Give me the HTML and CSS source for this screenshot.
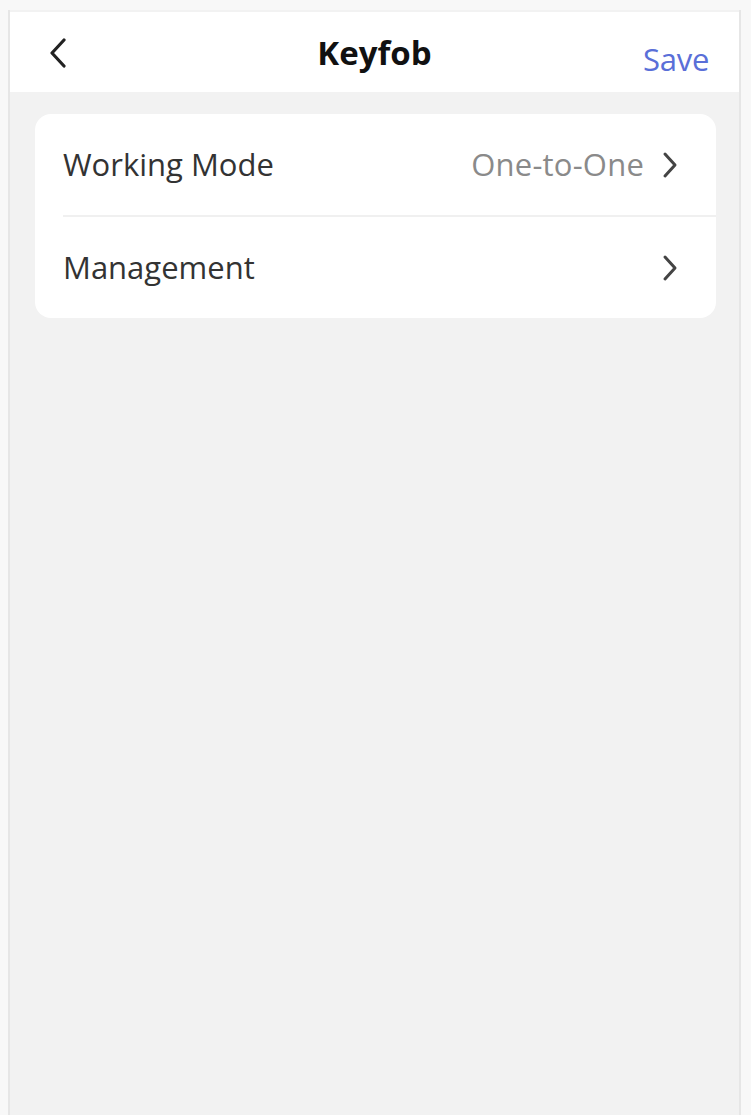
FILE: index.html
```html
<!DOCTYPE html>
<html>
<head>
<meta charset="utf-8">
<link rel="stylesheet" href="styles.css">
</head>
<body>
<div class="frame">
  <header class="nav">
    <span class="back">
      <svg width="20" height="30" viewBox="0 0 20 30"><path d="M16 2 L4 15 L16 28" fill="none" stroke="#222" stroke-width="3.2" stroke-linecap="round" stroke-linejoin="round"/></svg>
    </span>
    <h1 class="title">Keyfob</h1>
    <span class="save">Save</span>
  </header>
  <main class="content">
    <div class="card">
      <div class="row">
        <span class="label">Working Mode</span>
        <span class="value">One-to-One</span>
        <svg class="chev" width="18" height="28" viewBox="0 0 18 28"><path d="M4 3 L14 14 L4 25" fill="none" stroke="#444" stroke-width="3" stroke-linecap="round" stroke-linejoin="round"/></svg>
      </div>
      <div class="row">
        <span class="label">Management</span>
        <span class="value"></span>
        <svg class="chev" width="18" height="28" viewBox="0 0 18 28"><path d="M4 3 L14 14 L4 25" fill="none" stroke="#444" stroke-width="3" stroke-linecap="round" stroke-linejoin="round"/></svg>
      </div>
    </div>
  </main>
</div>
</body>
</html>
```
FILE: styles.css
```css
html, body {
  margin: 0;
  padding: 0;
  height: 100%;
}
body {
  background: #f8f8f8;
  font-family: "Open Sans", "Liberation Sans", sans-serif;
}
.frame {
  margin: 10px 10px 0 8px;
  height: 1105px;
  border-left: 2px solid #e6e6e6;
  border-right: 2px solid #e6e6e6;
  display: flex;
  flex-direction: column;
  background: #f2f2f2;
}
.nav {
  height: 80px;
  margin-top: 2px;
  background: #fff;
  display: grid;
  grid-template-columns: 1fr auto 1fr;
  align-items: center;
  padding: 0 31px;
}
.back {
  display: flex;
  width: 20px;
  margin-top: 2px;
  margin-left: 7px;
}
.title {
  margin: 0;
  font-size: 33px;
  font-weight: 700;
  color: #111;
  letter-spacing: 0;
}
.save {
  justify-self: end;
  font-size: 31px;
  color: #5a6fd8;
  margin-top: 14px;
  margin-right: -1px;
  letter-spacing: -0.3px;
}
.content {
  flex: 1;
  padding: 22px 23px 0 25px;
}
.card {
  background: #fff;
  border-radius: 16px;
  padding-left: 28px;
}
.row {
  display: flex;
  align-items: center;
  height: 101px;
  padding-right: 37px;
  gap: 17px;
}
.row + .row {
  border-top: 2px solid #f0f0f0;
}
.label {
  font-size: 31px;
  color: #333;
  flex: 1;
  letter-spacing: 0;
  margin-top: -2px;
}
.value {
  font-size: 31px;
  color: #8a8a8a;
  letter-spacing: 0.2px;
  margin-top: -2px;
}
.chev {
  display: block;
}
```
